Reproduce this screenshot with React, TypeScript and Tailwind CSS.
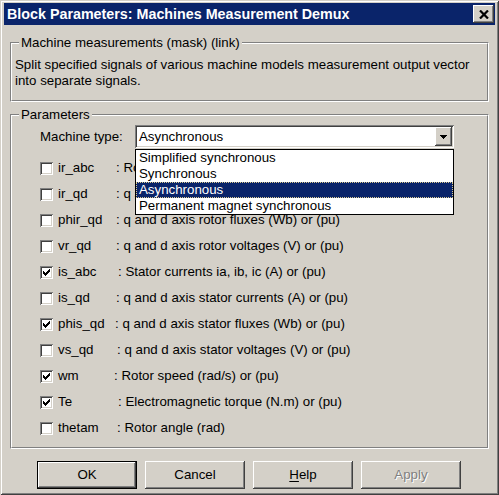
import React from 'react'

const raised =
  'bg-[#d4d0c8] shadow-[inset_-1px_-1px_#404040,inset_1px_1px_#ffffff,inset_-2px_-2px_#808080,inset_2px_2px_#d4d0c8]'
const sunken =
  'shadow-[inset_1px_1px_#808080,inset_-1px_-1px_#ffffff,inset_2px_2px_#404040,inset_-2px_-2px_#d4d0c8]'

const rows = [
  { name: 'ir_abc', w: 'w-[58px]', desc: 'Rotor currents ir_a, ir_b, ir_c (A) or (pu)', on: false },
  { name: 'ir_qd', w: 'w-[58px]', desc: 'q and d axis rotor currents (A) or (pu)', on: false },
  { name: 'phir_qd', w: 'w-[58px]', desc: 'q and d axis rotor fluxes (Wb) or (pu)', on: false },
  { name: 'vr_qd', w: 'w-[58px]', desc: 'q and d axis rotor voltages (V) or (pu)', on: false },
  { name: 'is_abc', w: 'w-[60px]', desc: 'Stator currents ia, ib, ic (A) or (pu)', on: true },
  { name: 'is_qd', w: 'w-[58px]', desc: 'q and d axis stator currents (A) or (pu)', on: false },
  { name: 'phis_qd', w: 'w-[57px]', desc: 'q and d axis stator fluxes (Wb) or (pu)', on: true },
  { name: 'vs_qd', w: 'w-[59px]', desc: 'q and d axis stator voltages (V) or (pu)', on: false },
  { name: 'wm', w: 'w-[56px]', desc: 'Rotor speed (rad/s) or (pu)', on: true },
  { name: 'Te', w: 'w-[60px]', desc: 'Electromagnetic torque (N.m) or (pu)', on: true },
  { name: 'thetam', w: 'w-[59px]', desc: 'Rotor angle (rad)', on: false },
]

const options = ['Simplified synchronous', 'Synchronous', 'Asynchronous', 'Permanent magnet synchronous']

// classic 3px-tall check columns
const check = [
  [3, 5], [4, 6], [5, 7], [6, 6], [7, 5], [8, 4], [9, 3],
]

function CheckBox({ on }: { on: boolean }) {
  return (
    <div className={`relative w-[13px] h-[13px] bg-white shrink-0 ${sunken}`}>
      {on && (
        <svg width="13" height="13" viewBox="0 0 13 13" shapeRendering="crispEdges" className="absolute inset-0">
          {check.map(([x, y]) => (
            <rect key={x} x={x} y={y} width="1" height="3" fill="#000" />
          ))}
        </svg>
      )}
    </div>
  )
}

function GroupBox({ title, className, children }: { title: string; className: string; children: React.ReactNode }) {
  return (
    <div className={`relative border border-t-[#808080] border-l-[#808080] border-r-white border-b-white ${className}`}>
      <div className="h-full border border-t-white border-l-white border-r-[#808080] border-b-[#808080]">
        {children}
      </div>
      <span className="absolute left-[8px] top-[-8px] px-[2px] leading-[16px] bg-[#d4d0c8]">{title}</span>
    </div>
  )
}

function Button({ children, def, disabled }: { children: React.ReactNode; def?: boolean; disabled?: boolean }) {
  return (
    <div className={`w-[100px] h-[28px] flex ${def ? 'border border-black' : ''}`}>
      <div
        className={`flex-1 flex items-center justify-center ${raised} ${
          disabled ? 'text-[#808080] [text-shadow:1px_1px_0_#ffffff]' : 'text-black'
        }`}
      >
        {children}
      </div>
    </div>
  )
}

export default function App() {
  return (
    <div className="w-[499px] h-[495px] bg-[#d4d0c8] text-[13.3px] text-black font-['Liberation_Sans',Arial,sans-serif] shadow-[inset_1px_1px_#d4d0c8,inset_-1px_-1px_#404040,inset_2px_2px_#ffffff,inset_-2px_-2px_#808080] pt-[3px] px-[4px] flex flex-col">
      {/* title bar */}
      <div className="h-[22px] bg-[#0a246a] flex items-center justify-between pl-[3px]">
        <span className="text-white font-bold text-[14.3px] leading-none">
          Block Parameters: Machines Measurement Demux
        </span>
        <div className={`w-[21px] h-[18px] mr-[1px] flex items-center justify-center ${raised}`}>
          <svg width="10" height="9" viewBox="0 0 10 9">
            <path d="M1 0.5 L9 8.5 M9 0.5 L1 8.5" stroke="#000" strokeWidth="2.2" />
          </svg>
        </div>
      </div>

      <div className="pl-[6px] flex flex-col">
        <GroupBox title="Machine measurements (mask) (link)" className="w-[479px] h-[60px] mt-[17px]">
          <div className="pt-[13px] pl-[3px] leading-[16px]">
            Split specified signals of various machine models measurement output vector
            <br />
            into separate signals.
          </div>
        </GroupBox>

        <GroupBox title="Parameters" className="w-[479px] h-[335px] mt-[12px]">
          <div className="pl-[28px] pt-[9px]">
            <div className="flex items-center h-[23px]">
              <span className="w-[95px]">Machine type:</span>
              <div className="relative">
                <div className={`w-[319px] h-[23px] bg-white flex items-center justify-between p-[2px] ${sunken}`}>
                  <span className="pl-[2px]">Asynchronous</span>
                  <div className={`w-[17px] h-[19px] flex items-center justify-center ${raised}`}>
                    <svg width="7" height="4" viewBox="0 0 7 4" shapeRendering="crispEdges">
                      <path d="M0 0H7L3.5 4Z" fill="#000" />
                    </svg>
                  </div>
                </div>
                <div className="absolute z-10 left-0 top-[24px] w-[319px] bg-white border border-black flex flex-col">
                  {options.map((o) =>
                    o === 'Asynchronous' ? (
                      <div
                        key={o}
                        className="h-[16px] leading-[14px] pl-[2px] bg-[#0a246a] text-white border border-dotted border-[#d8c890]"
                      >
                        {o}
                      </div>
                    ) : (
                      <div key={o} className="h-[16px] leading-[16px] pl-[3px]">
                        {o}
                      </div>
                    )
                  )}
                </div>
              </div>
            </div>

            <div className="mt-[7px] flex flex-col">
              {rows.map((r) => (
                <div key={r.name} className="h-[26px] flex items-center">
                  <CheckBox on={r.on} />
                  <span className={`ml-[5px] ${r.w}`}>{r.name}</span>
                  <span>: {r.desc}</span>
                </div>
              ))}
            </div>
          </div>
        </GroupBox>

        <div className="mt-[12px] pl-[27px] flex gap-[8px]">
          <Button def>OK</Button>
          <Button>Cancel</Button>
          <Button>
            <span>
              <span className="underline underline-offset-2">H</span>elp
            </span>
          </Button>
          <Button disabled>Apply</Button>
        </div>
      </div>
    </div>
  )
}
